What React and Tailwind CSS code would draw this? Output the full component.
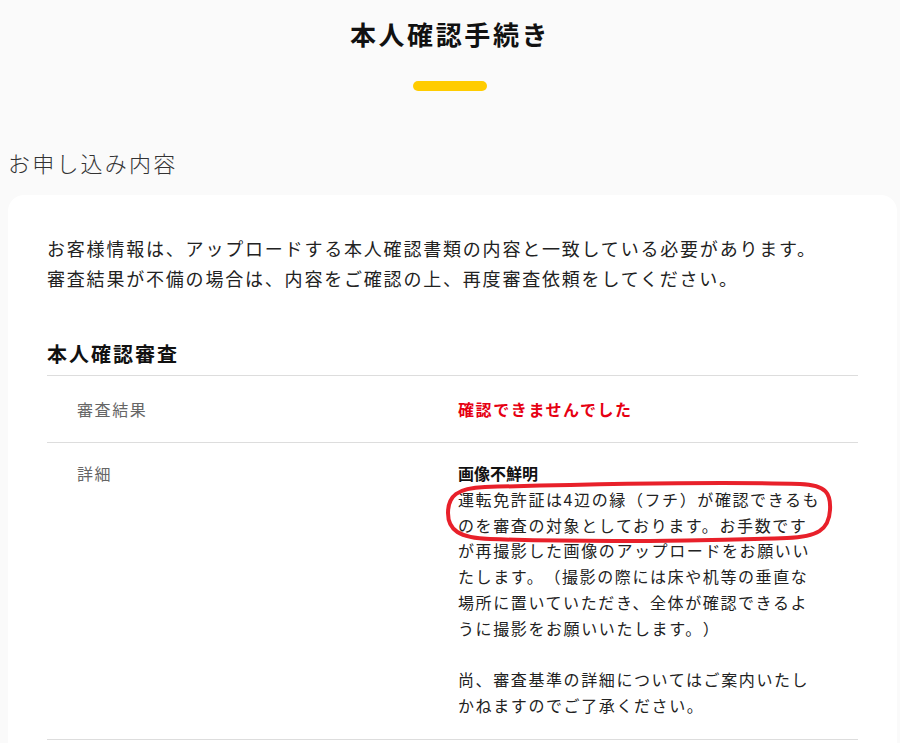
import React from "react";

const jp = { fontFamily: '"Noto Sans CJK JP", "Noto Sans", sans-serif' };

export default function App() {
  return (
    <div className="min-h-[743px] bg-[#fafafa] pt-[14px] text-[#222] [text-spacing-trim:space-all]" style={jp}>
      <h1 className="text-center text-[26px] font-bold leading-[40px] tracking-[0.1em] text-[#111]">
        本人確認手続き
      </h1>
      <div className="mx-auto mt-[27px] h-[10px] w-[74px] rounded-full bg-[#ffcc00]" />
      <h2 className="mt-[55px] pl-[8px] text-[22px] font-light leading-[32px] tracking-[0.1em] text-[#333]">
        お申し込み内容
      </h2>
      <div className="ml-[8px] mr-[3px] mt-[17px] rounded-t-[16px] bg-white px-[39px] pt-[38px] pb-[40px]">
        <p className="whitespace-nowrap text-[18px] leading-[30px] tracking-[0.1em] text-[#222]">
          お客様情報は、アップロードする本人確認書類の内容と一致している必要があります。
          <br />
          審査結果が不備の場合は、内容をご確認の上、再度審査依頼をしてください。
        </p>
        <h3 className="mt-[46px] pb-[6px] text-[20px] font-bold leading-[30px] tracking-[0.1em] text-[#111]">
          本人確認審査
        </h3>
        <div className="border-t border-[#dddddd]">
          <div className="flex border-b border-[#dddddd] py-[20px] text-[16px] leading-[26px] tracking-[0.1em]">
            <div className="w-[411px] shrink-0 pl-[30px] text-[#666]">審査結果</div>
            <div className="font-bold text-[#e60012]">確認できませんでした</div>
          </div>
          <div className="flex border-b border-[#dddddd] pt-[18px] pb-[20px] text-[16px] leading-[25.8px] tracking-[0.1em]">
            <div className="w-[411px] shrink-0 pl-[30px] text-[#666]">詳細</div>
            <div className="relative whitespace-nowrap text-[#222]">
              <div className="font-bold tracking-normal text-[#111]">画像不鮮明</div>
              <div>運転免許証は4辺の縁（フチ）が確認できるも</div>
              <div>のを審査の対象としております。お手数です</div>
              <div>が再撮影した画像のアップロードをお願いい</div>
              <div>たします。（撮影の際には床や机等の垂直な</div>
              <div>場所に置いていただき、全体が確認できるよ</div>
              <div>うに撮影をお願いいたします。）</div>
              <div className="h-[25.8px]" />
              <div>尚、審査基準の詳細についてはご案内いたし</div>
              <div>かねますのでご了承ください。</div>
              <svg
                className="pointer-events-none absolute left-[-13px] top-[19px]"
                width="392"
                height="64"
                viewBox="0 0 392 64"
                fill="none"
              >
                <path
                  d="M 40 7 C 150 4, 290 2, 355 4 C 382 5, 386 14, 385 30 C 384 50, 372 57, 342 58 C 250 61, 130 62, 45 59 C 14 58, 3 50, 3 33 C 3 16, 12 8, 40 7 Z"
                  stroke="#e8202a"
                  strokeWidth="4"
                />
              </svg>
            </div>
          </div>
        </div>
      </div>
    </div>
  );
}
